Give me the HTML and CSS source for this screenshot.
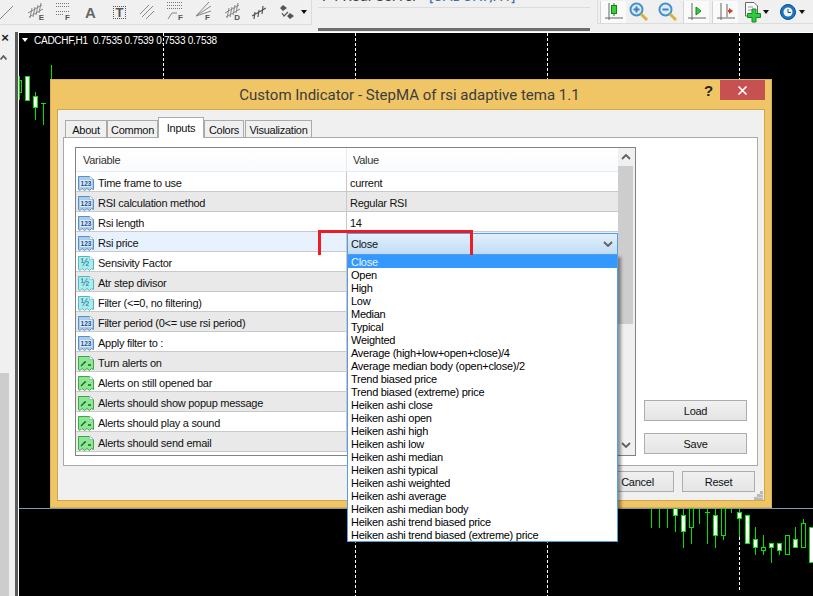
FILE: index.html
```html
<!DOCTYPE html>
<html lang="en">
<head>
<meta charset="utf-8">
<title>Custom Indicator</title>
<link rel="stylesheet" href="styles.css">
</head>
<body>
<svg class="defs" width="0" height="0">
  <defs>
    <symbol id="i-int" viewBox="0 0 16 16">
      <path class="doc doc-blue" d="M.5 1.5H11.5L15.5 4.5V14.5L13.5 13.5 11.5 15.5 9 13.5 6.5 15.5 4 13.5 2 15.5.5 14.5Z"/>
      <path class="fold" d="M11.5 1.5V4.5H15.5"/>
      <rect class="lab" x="2" y="5" width="12" height="7"/>
      <text class="ico-t ico-blue" x="8" y="11">123</text>
    </symbol>
    <symbol id="i-dbl" viewBox="0 0 16 16">
      <path class="doc doc-teal" d="M.5 1.5H11.5L15.5 4.5V14.5L13.5 13.5 11.5 15.5 9 13.5 6.5 15.5 4 13.5 2 15.5.5 14.5Z"/>
      <path class="fold" d="M11.5 1.5V4.5H15.5"/>
      <text class="ico-t ico-teal" x="7" y="11">½</text>
    </symbol>
    <symbol id="i-bool" viewBox="0 0 16 16">
      <path class="doc doc-green" d="M.5 1.5H11.5L15.5 4.5V14.5L13.5 13.5 11.5 15.5 9 13.5 6.5 15.5 4 13.5 2 15.5.5 14.5Z"/>
      <path class="fold" d="M11.5 1.5V4.5H15.5"/>
      <path class="wave" d="M3 11 7 7H8M10 10H13"/>
    </symbol>
    <symbol id="i-chev" viewBox="0 0 10 6">
      <path class="chev" d="M1 1 5 5 9 1"/>
    </symbol>
    <symbol id="i-hatch" viewBox="0 0 18 18">
      <path class="tool-s" d="M1 11 15 3M2 15 16 7M5 6 3 16M8 5 6 15M11 3 9 13M14 1 12 11"/>
    </symbol>
  </defs>
</svg>

<header class="topbar">
  <div class="tools-left">
    <div class="tools-row">
      <svg class="t-line" width="13" height="13" viewBox="0 0 13 13"><path class="tool-s" d="M0 13 13 0"/></svg>
      <span class="tool t-e"><svg width="18" height="18"><use href="#i-hatch"/></svg><b>E</b></span>
      <span class="tool t-f1"><svg width="14" height="12" viewBox="0 0 14 12"><path class="tool-d" d="M0 .5H13M0 3.5H13M0 8.5H13M0 11.5H8"/></svg><b>F</b></span>
      <span class="tool-a">A</span>
      <span class="tool-t">T</span>
      <svg class="t-par" width="14" height="14" viewBox="0 0 14 14"><path class="tool-s" d="M0 9 9 0M2 12 13 1M6 14 14 6"/></svg>
      <span class="tool t-f2"><svg width="16" height="17" viewBox="0 0 16 17"><path class="tool-d" d="M0 .5H15M0 3.5H15M0 6.5H15"/><path class="tool-s" d="M1 17 5 11H10"/></svg><b>F</b></span>
      <span class="tool t-f3"><svg width="15" height="15" viewBox="0 0 15 15"><path class="tool-s" d="M0 14 13 0M0 14 15 4M0 14 15 9"/></svg><b>F</b></span>
      <span class="tool t-d"><svg width="18" height="18"><use href="#i-hatch"/></svg><b>D</b></span>
      <svg class="t-pf" width="14" height="14" viewBox="0 0 14 14"><path class="tool-k" d="M0 11 14 3M3 7 2 14M7 5 6 12M11 1 10 9"/></svg>
      <svg class="t-arrows" width="15" height="15" viewBox="0 0 15 15"><path class="tool-fill" d="M3 0 7 3 3 6 0 3ZM10 8 14 11 10 14 7 11Z"/><path class="tool-k" d="M2 8 4 11 8 7"/></svg>
      <i class="drop-arrow"></i>
    </div>
  </div>
  <div class="doc-tabs">
    <div class="doc-title"><span>F4 Real Server</span> - <em>[CADCHF,H1]</em></div>
  </div>
  <div class="tools-right">
    <div class="tools-row-r">
      <span class="tbtn on"><svg width="18" height="18" viewBox="0 0 18 18"><path class="axis" d="M4 0V17M0 15H18"/><path class="g-wick" d="M9 0V13"/><rect class="g-body" x="6.5" y="2.5" width="5" height="8"/></svg></span>
      <span class="tbtn mr3"><svg class="mag" width="20" height="20" viewBox="0 0 20 20"><circle class="lens" cx="7.5" cy="7.5" r="6"/><path class="sym" d="M4.500 7.500H10.500M7.500 4.500V10.500"/><path class="handle" d="M12 12 18 18"/></svg></span>
      <span class="tbtn mr2"><svg class="mag" width="20" height="20" viewBox="0 0 20 20"><circle class="lens" cx="7.500" cy="7.500" r="6"/><path class="sym" d="M4.500 7.500H10.500"/><path class="handle" d="M12 12 18 18"/></svg></span>
      <span class="tbtn on mr3"><svg width="18" height="18" viewBox="0 0 18 18"><path class="axis" d="M4 0V17M0 15H18"/><path class="g-tri" d="M8 4 13 8 8 12Z"/></svg></span>
      <span class="tbtn on"><svg width="18" height="18" viewBox="0 0 18 18"><path class="axis" d="M4 0V17M0 15H18M10 1V14"/><path class="r-tri" d="M16 8 12 5V7H11V9H12V11Z"/></svg></span>
      <span class="tbtn plain p-new"><svg width="20" height="22" viewBox="0 0 20 22"><path class="newdoc" d="M1.500 1.500H10L13.500 5V15H1.500Z"/><path class="newline" d="M4 6H9M4 9H9"/><path class="plus" d="M3.500 12.500H8V8H12V12.500H16.500V16.500H12V21H8V16.500H3.500Z"/></svg><i class="drop-arrow"></i></span>
      <span class="tbtn plain p-clock"><svg width="18" height="18" viewBox="0 0 18 18"><circle class="clock" cx="9" cy="9" r="7.500"/><circle class="face" cx="9" cy="9" r="4.500"/><path class="hands" d="M9 6V9.500H12"/></svg><i class="drop-arrow"></i></span>
    </div>
  </div>
</header>

<main class="workspace">
  <aside class="sidepanel">
    <div class="side-head"><span class="side-x">×</span></div>
    <svg class="side-up" width="7" height="5" viewBox="0 0 7 5"><path class="chev" d="M.5 4.500 3.500 1 6.500 4.500"/></svg>
    <div class="side-thumb"></div>
  </aside>
  <section class="chart">
    <svg class="plot" width="794" height="563" viewBox="19 33 794 563">
      <path class="sep" d="M19 508.500H813"/>
      <path class="dash" d="M163.500 33V80M355.500 33V80M547.500 33V80M739.500 33V80M355.500 505V596M547.500 505V596M739.500 537V592"/>
      <path class="wick" d="M19.500 76V100M27.500 76V101M35.500 92V120M43.500 103V125M51.500 65V80M41 103.500H46"/>
      <rect class="hollow" x="19.500" y="80.500" width="2" height="12"/>
      <rect class="body" x="25.500" y="76.500" width="4" height="24"/>
      <rect class="body" x="33.500" y="96.500" width="4" height="11"/>
      <path class="wick" d="M651.500 508V528M659.500 508V528M667.500 508V528M675.500 508V532M683.500 509V548M691.500 508V544M699.500 508V524M707.500 508V544M705 512.500H710M715.500 508V548M723.500 508V540M731.500 508V513M739.500 508V537M755.500 527V555M763.500 535V555M771.500 543V563M779.500 543V555M795.500 527V548M803.500 519V548"/>
      <rect class="body" x="673.500" y="508.500" width="4" height="7"/>
      <rect class="body" x="681.500" y="515.500" width="4" height="16"/>
      <rect class="hollow" x="689.500" y="508.500" width="4" height="19"/>
      <rect class="body" x="713.500" y="515.500" width="4" height="20"/>
      <rect class="hollow" x="721.500" y="508.500" width="4" height="27"/>
      <rect class="body" x="737.500" y="512.500" width="4" height="6"/>
      <rect class="body" x="745.500" y="515.500" width="4" height="28"/>
      <rect class="body" x="753.500" y="539.500" width="4" height="8"/>
      <rect class="hollow" x="761.500" y="547.500" width="4" height="3"/>
      <rect class="body" x="769.500" y="543.500" width="4" height="4"/>
      <rect class="body" x="777.500" y="543.500" width="4" height="7"/>
      <rect class="hollow" x="785.500" y="535.500" width="4" height="19"/>
      <rect class="body" x="793.500" y="539.500" width="4" height="8"/>
      <rect class="hollow" x="801.500" y="523.500" width="4" height="24"/>
      <rect class="body" x="809.500" y="527.500" width="4" height="35"/>
    </svg>
    <div class="chart-label"><i class="label-arrow"></i><span>CADCHF,H1&nbsp; 0.7535 0.7539 0.7533 0.7538</span></div>
  </section>
</main>

<section class="dialog">
  <div class="titlebar">
    <div class="title">Custom Indicator - StepMA of rsi adaptive tema 1.1</div>
    <div class="help">?</div>
    <div class="close"><svg width="11" height="9" viewBox="0 0 11 9"><path class="close-x" d="M1.500 .5 9.500 8.500M9.500 .5 1.500 8.500"/></svg></div>
  </div>
  <div class="client">
    <nav class="tabs">
      <span class="tab w-about">About</span>
      <span class="tab w-common">Common</span>
      <span class="tab tab-on w-inputs">Inputs</span>
      <span class="tab w-colors">Colors</span>
      <span class="tab w-vis">Visualization</span>
    </nav>
    <div class="panel">
      <div class="list">
        <div class="list-main">
          <div class="list-head"><span class="hcell">Variable</span><span class="hcell hcell-v">Value</span></div>
          <div class="row"><span class="var"><svg class="ico"><use href="#i-int"/></svg>Time frame to use</span><span class="val">current</span></div>
          <div class="row alt"><span class="var"><svg class="ico"><use href="#i-int"/></svg>RSI calculation method</span><span class="val">Regular RSI</span></div>
          <div class="row"><span class="var"><svg class="ico"><use href="#i-int"/></svg>Rsi length</span><span class="val">14</span></div>
          <div class="row sel"><span class="var"><svg class="ico"><use href="#i-int"/></svg>Rsi price</span><span class="val"></span></div>
          <div class="row"><span class="var"><svg class="ico"><use href="#i-dbl"/></svg>Sensivity Factor</span><span class="val"></span></div>
          <div class="row alt"><span class="var"><svg class="ico"><use href="#i-dbl"/></svg>Atr step divisor</span><span class="val"></span></div>
          <div class="row"><span class="var"><svg class="ico"><use href="#i-dbl"/></svg>Filter (&lt;=0, no filtering)</span><span class="val"></span></div>
          <div class="row alt"><span class="var"><svg class="ico"><use href="#i-int"/></svg>Filter period (0&lt;= use rsi period)</span><span class="val"></span></div>
          <div class="row"><span class="var"><svg class="ico"><use href="#i-int"/></svg>Apply filter to :</span><span class="val"></span></div>
          <div class="row alt"><span class="var"><svg class="ico"><use href="#i-bool"/></svg>Turn alerts on</span><span class="val"></span></div>
          <div class="row"><span class="var"><svg class="ico"><use href="#i-bool"/></svg>Alerts on still opened bar</span><span class="val"></span></div>
          <div class="row alt"><span class="var"><svg class="ico"><use href="#i-bool"/></svg>Alerts should show popup message</span><span class="val"></span></div>
          <div class="row"><span class="var"><svg class="ico"><use href="#i-bool"/></svg>Alerts should play a sound</span><span class="val"></span></div>
          <div class="row alt"><span class="var"><svg class="ico"><use href="#i-bool"/></svg>Alerts should send email</span><span class="val"></span></div>
        </div>
        <div class="vscroll">
          <svg class="sb-arrow" width="10" height="6"><use href="#i-chev" class="flip"/></svg>
          <div class="sb-thumb"></div>
          <svg class="sb-arrow sb-down" width="10" height="6"><use href="#i-chev"/></svg>
        </div>
      </div>
      <div class="side-btns">
        <span class="btn">Load</span>
        <span class="btn">Save</span>
      </div>
    </div>
    <div class="footer">
      <span class="btn btn-w">OK</span>
      <span class="btn btn-w">Cancel</span>
      <span class="btn btn-w">Reset</span>
    </div>
    <svg class="grip" width="9" height="9" viewBox="0 0 9 9"><path class="grip-d" d="M6 0H9V3H6ZM3 3H6V6H3ZM6 3.500H9V6H6ZM0 6H3V9H0ZM3 6.500H6V9H3ZM6 6.500H9V9H6Z"/></svg>
  </div>
</section>

<div class="combo">
  <div class="combo-box"><span>Close</span><svg width="10" height="6"><use href="#i-chev"/></svg></div>
  <ul class="drop">
    <li class="hi">Close</li>
    <li>Open</li>
    <li>High</li>
    <li>Low</li>
    <li>Median</li>
    <li>Typical</li>
    <li>Weighted</li>
    <li>Average (high+low+open+close)/4</li>
    <li>Average median body (open+close)/2</li>
    <li>Trend biased price</li>
    <li>Trend biased (extreme) price</li>
    <li>Heiken ashi close</li>
    <li>Heiken ashi open</li>
    <li>Heiken ashi high</li>
    <li>Heiken ashi low</li>
    <li>Heiken ashi median</li>
    <li>Heiken ashi typical</li>
    <li>Heiken ashi weighted</li>
    <li>Heiken ashi average</li>
    <li>Heiken ashi median body</li>
    <li>Heiken ashi trend biased price</li>
    <li>Heiken ashi trend biased (extreme) price</li>
  </ul>
</div>

<div class="annot"></div>
</body>
</html>
```
FILE: styles.css
```css
* { box-sizing: border-box; }
html, body { margin: 0; padding: 0; }
body {
  position: relative;
  width: 813px;
  height: 596px;
  overflow: hidden;
  background: #f0f0f0;
  font-family: "Liberation Sans", Arial, sans-serif;
  font-size: 11px;
  letter-spacing: -.27px;
  color: #111;
}
.defs { position: absolute; }

/* top toolbars */
.topbar { display: flex; height: 32px; background: #f0f0f0; }
.tools-left { width: 318px; flex: none; }
.tools-row {
  position: relative;
  width: 312px;
  height: 25px;
  border-right: 1px solid #dcdcdc;
  border-bottom: 1px solid #dcdcdc;
  overflow: hidden;
  display: flex;
  align-items: center;
}
.t-line { margin: 0 14px 0 0; flex: none; }
.tool { position: relative; display: block; flex: none; height: 20px; }
.tool b {
  position: absolute;
  right: 0;
  bottom: 0;
  font: 700 8px "Liberation Sans", sans-serif;
  letter-spacing: 0;
  color: #555;
}
.tool-s { fill: none; stroke: #888; stroke-width: 1; }
.tool-d { fill: none; stroke: #777; stroke-width: 1; stroke-dasharray: 1 1; }
.tool-k { fill: none; stroke: #555; stroke-width: 1.2; }
.tool-fill { fill: #555; }
.t-e { width: 17px; margin-right: 12px; }
.t-f1 { width: 14px; margin-right: 15px; padding-top: 1px; }
.tool-a { font: 700 15px "Liberation Sans", sans-serif; letter-spacing: 0; color: #666; width: 11px; margin-right: 17px; }
.tool-t {
  font: 700 13px "Liberation Sans", sans-serif;
  letter-spacing: 0;
  color: #555;
  width: 13px;
  height: 13px;
  line-height: 12px;
  text-align: center;
  border: 1px dotted #555;
  margin-right: 14px;
}
.t-par { margin-right: 13px; flex: none; }
.t-f2 { width: 16px; margin-right: 13px; }
.t-f3 { width: 14px; margin-right: 14px; }
.t-d { width: 16px; margin-right: 12px; }
.t-pf { margin-right: 14px; flex: none; }
.t-arrows { flex: none; margin-right: 6px; }
.drop-arrow {
  display: inline-block;
  flex: none;
  width: 0;
  height: 0;
  border-left: 3.5px solid transparent;
  border-right: 3.5px solid transparent;
  border-top: 4px solid #111;
}
.doc-tabs {
  flex: none;
  width: 272px;
  height: 31px;
  border-bottom: 3px solid #6e6e6e;
  overflow: hidden;
  background: linear-gradient(#f0f0f0 0 7px, #dcdcdc 7px 8px, #f0f0f0 8px);
}
.doc-title {
  margin: -14px 0 0 4px;
  font-family: Roboto, sans-serif;
  font-size: 15px;
  line-height: 20px;
  color: #444;
  letter-spacing: 0;
  white-space: nowrap;
}
.doc-title em { font-style: normal; color: #3a6ea5; }
.tools-right { flex: 1; min-width: 0; }
.tools-row-r {
  margin-left: 7px;
  height: 24px;
  border-left: 1px solid #dcdcdc;
  border-bottom: 1px solid #dcdcdc;
  display: flex;
  align-items: center;
  padding-left: 2px;
}
.tbtn {
  display: flex;
  align-items: center;
  justify-content: center;
  width: 26px;
  height: 22px;
  flex: none;
}
.mr3 { margin-right: 3px; }
.mr2 { margin-right: 2px; }
.tbtn.on { background: #fafafa; border-left: 1px solid #d4d4d4; }
.tbtn.plain { width: auto; }
.p-new { margin-left: 6px; margin-right: 10px; }
.p-new .drop-arrow { margin-left: -1px; }
.p-clock .drop-arrow { margin-left: 2px; }
.mag { flex: none; }
.axis { fill: none; stroke: #666; stroke-width: 1; }
.g-wick { stroke: #0a8a0a; stroke-width: 1; }
.g-body { fill: #3fc93f; stroke: #0a8a0a; }
.g-tri { fill: #3fc93f; stroke: #0a8a0a; }
.r-tri { fill: #d2401a; }
.lens { fill: #d9ecfb; stroke: #4a90c8; stroke-width: 2; }
.sym { fill: none; stroke: #3a7fbf; stroke-width: 2; }
.handle { fill: none; stroke: #d8b23c; stroke-width: 3; }
.newdoc { fill: #fafafa; stroke: #666; }
.newline { stroke: #999; fill: none; }
.plus { fill: #2ecc40; stroke: #118a22; }
.clock { fill: #1a75c4; stroke: #0b4f8f; }
.face { fill: #eef4fa; }
.hands { fill: none; stroke: #444; }

/* workspace */
.workspace { display: flex; height: 564px; }
.sidepanel {
  position: relative;
  flex: none;
  width: 19px;
  background: #f0f0f0;
  border-right: 1px solid #fff;
  box-shadow: inset -3px 0 0 #5a5a5a;
}
.side-head { height: 12px; text-align: center; width: 10px; }
.side-x { font: 700 13px/12px "Liberation Sans", sans-serif; color: #222; }
.side-up { position: absolute; left: 0; top: 23px; }
.side-thumb {
  position: absolute;
  left: 0;
  top: 341px;
  width: 9px;
  bottom: 0;
  background: #cdcdcd;
}
.chart {
  position: relative;
  flex: 1;
  background: #000;
  border-top: 1px solid #fff;
}
.plot { position: absolute; left: 0; top: 0; display: block; }
.sep { stroke: #8599a8; fill: none; }
.dash { stroke: #fff; stroke-dasharray: 3 2; fill: none; }
.wick { stroke: #00e600; fill: none; }
.body { fill: #fff; stroke: #00e600; }
.hollow { fill: #000; stroke: #00e600; }
.chart-label {
  position: absolute;
  left: 3px;
  top: 0;
  display: flex;
  align-items: center;
  height: 14px;
  color: #fff;
  font-size: 10px;
  letter-spacing: -.25px;
  white-space: pre;
}
.label-arrow {
  width: 0;
  height: 0;
  margin-right: 6px;
  border-left: 3.500px solid transparent;
  border-right: 3.500px solid transparent;
  border-top: 4px solid #fff;
}

/* dialog */
.dialog {
  position: absolute;
  left: 50px;
  top: 79px;
  width: 722px;
  height: 429px;
  background: #efc566;
  border: 1px solid #d8b05a;
  display: flex;
  flex-direction: column;
  padding: 0 6px 6px;
}
.titlebar { position: relative; height: 29px; flex: none; }
.title {
  font-family: Roboto, sans-serif;
  font-size: 15px;
  letter-spacing: 0;
  line-height: 30px;
  text-align: center;
  color: #3c3c3c;
  padding-right: 3px;
}
.help {
  position: absolute;
  left: 647px;
  top: 1px;
  font: 700 15px/20px "Liberation Sans", sans-serif;
  color: #222;
}
.close {
  position: absolute;
  right: 0;
  top: 0;
  width: 45px;
  height: 20px;
  background: #c75050;
  display: flex;
  align-items: center;
  justify-content: center;
}
.close-x { fill: none; stroke: #fff; stroke-width: 1.600; }
.client {
  position: relative;
  flex: 1;
  background: #f0f0f0;
  border: 1px solid #cfa650;
  display: flex;
  flex-direction: column;
}

/* tabs */
.tabs { display: flex; align-items: flex-end; height: 27px; padding-left: 7px; flex: none; }
.tab {
  height: 17px;
  line-height: 18px;
  text-align: center;
  background: #f0f0f0;
  border: 1px solid #ababab;
  border-bottom: none;
  flex: none;
}
.tab-on {
  position: relative;
  height: 21px;
  line-height: 20px;
  background: #fff;
  margin-bottom: -1px;
  z-index: 1;
}
.w-about { width: 42px; }
.w-common { width: 51px; }
.w-inputs { width: 46px; }
.w-colors { width: 40px; margin-right: 1px; }
.w-vis { width: 67px; }

.panel {
  height: 329px;
  flex: none;
  margin: 0 6px 0 5px;
  padding: 9px 0 0 11px;
  background: #fff;
  border: 1px solid #a9a9a9;
  display: flex;
}
.list {
  width: 561px;
  height: 309px;
  flex: none;
  border: 1px solid #828282;
  display: flex;
  background: #fff;
}
.list-main { flex: 1; min-width: 0; }
.list-head {
  display: grid;
  grid-template-columns: 270px 1fr;
  height: 24px;
  background: linear-gradient(#fff, #fafbfd);
  border-bottom: 1px solid #e3ecf5;
  color: #333;
}
.hcell { padding-left: 7px; line-height: 25px; }
.hcell-v { padding-left: 6px; border-left: 1px solid #e3ecf5; }
.row {
  display: grid;
  grid-template-columns: 270px 1fr;
  grid-template-rows: 19px;
  height: 20px;
  border-bottom: 1px solid #c9c9c9;
  background: #fff;
}
.row.alt { background: #e9e9e9; }
.row.sel { background: #e8f2fe; }
.var {
  display: flex;
  align-items: center;
  gap: 4px;
  padding: 3px 0 0 2px;
  line-height: 16px;
  white-space: nowrap;
}
.val { padding-left: 3px; border-left: 1px solid #c9c9c9; line-height: 22px; }
.ico { width: 16px; height: 16px; flex: none; }
.doc { stroke-width: 1; }
.doc-blue { fill: #a9cdf0; stroke: #5a8fc4; }
.doc-teal { fill: #a8ecf0; stroke: #55b7c6; }
.doc-green { fill: #8fe596; stroke: #3da544; }
.fold { fill: #fff; stroke: #8aa; stroke-width: .6; }
.lab { fill: #dcebfa; }
.ico-t { font: 700 6.500px "Liberation Sans", sans-serif; letter-spacing: 0; text-anchor: middle; }
.ico-blue { fill: #1b4c8a; }
.ico-teal { fill: #146a7c; font-size: 10px; font-weight: 400; }
.wave { fill: none; stroke: #0f6b1c; stroke-width: 1.300; }
.chev { fill: none; stroke: #606060; stroke-width: 1.800; }
.vscroll {
  position: relative;
  width: 17px;
  flex: none;
  background: #f0f0f0;
  display: flex;
  flex-direction: column;
  align-items: center;
}
.sb-arrow { position: absolute; top: 6px; left: 3px; transform: scaleY(-1); }
.sb-down { top: auto; bottom: 7px; transform: none; }
.sb-thumb {
  position: absolute;
  left: 0;
  top: 18px;
  width: 15px;
  height: 158px;
  background: #cdcdcd;
}
.side-btns {
  flex: none;
  width: 103px;
  height: 307px;
  margin-left: 8px;
  display: flex;
  flex-direction: column;
  justify-content: flex-end;
  gap: 12px;
}
.btn {
  display: block;
  flex: none;
  height: 21px;
  line-height: 20px;
  text-align: center;
  border: 1px solid #adadad;
  background: linear-gradient(#f0f0f0, #e5e5e5);
}
.btn-w { width: 73px; }
.footer {
  display: flex;
  justify-content: flex-end;
  gap: 8px;
  padding: 5px 9px 0 0;
}
.grip { position: absolute; right: 1px; bottom: 0; }
.grip-d { fill: #b9b9b9; }

/* open combo box, over the list */
.combo {
  position: absolute;
  left: 347px;
  top: 233px;
  width: 271px;
  z-index: 3;
}
.combo-box {
  display: flex;
  align-items: center;
  justify-content: space-between;
  height: 21px;
  padding: 0 4px 0 3px;
  border: 1px solid #569de5;
  border-bottom-width: 0;
  background: linear-gradient(#e3f0fc, #bfdcf5);
}
.drop {
  list-style: none;
  margin: 0;
  padding: 0;
  height: 288px;
  background: #fff;
  border: 1px solid #569de5;
  box-shadow: 3px 3px 3px rgba(0, 0, 0, .4);
  line-height: 14px;
  color: #000;
}
.drop li { height: 13px; padding-left: 3px; white-space: nowrap; }
.drop .hi { background: #3399ff; color: #e8f2ff; }

/* hand-drawn red mark */
.annot {
  position: absolute;
  left: 318px;
  top: 230px;
  width: 155px;
  height: 25px;
  border: solid #ed1c24;
  border-width: 3px 3px 0;
  z-index: 4;
}
```
